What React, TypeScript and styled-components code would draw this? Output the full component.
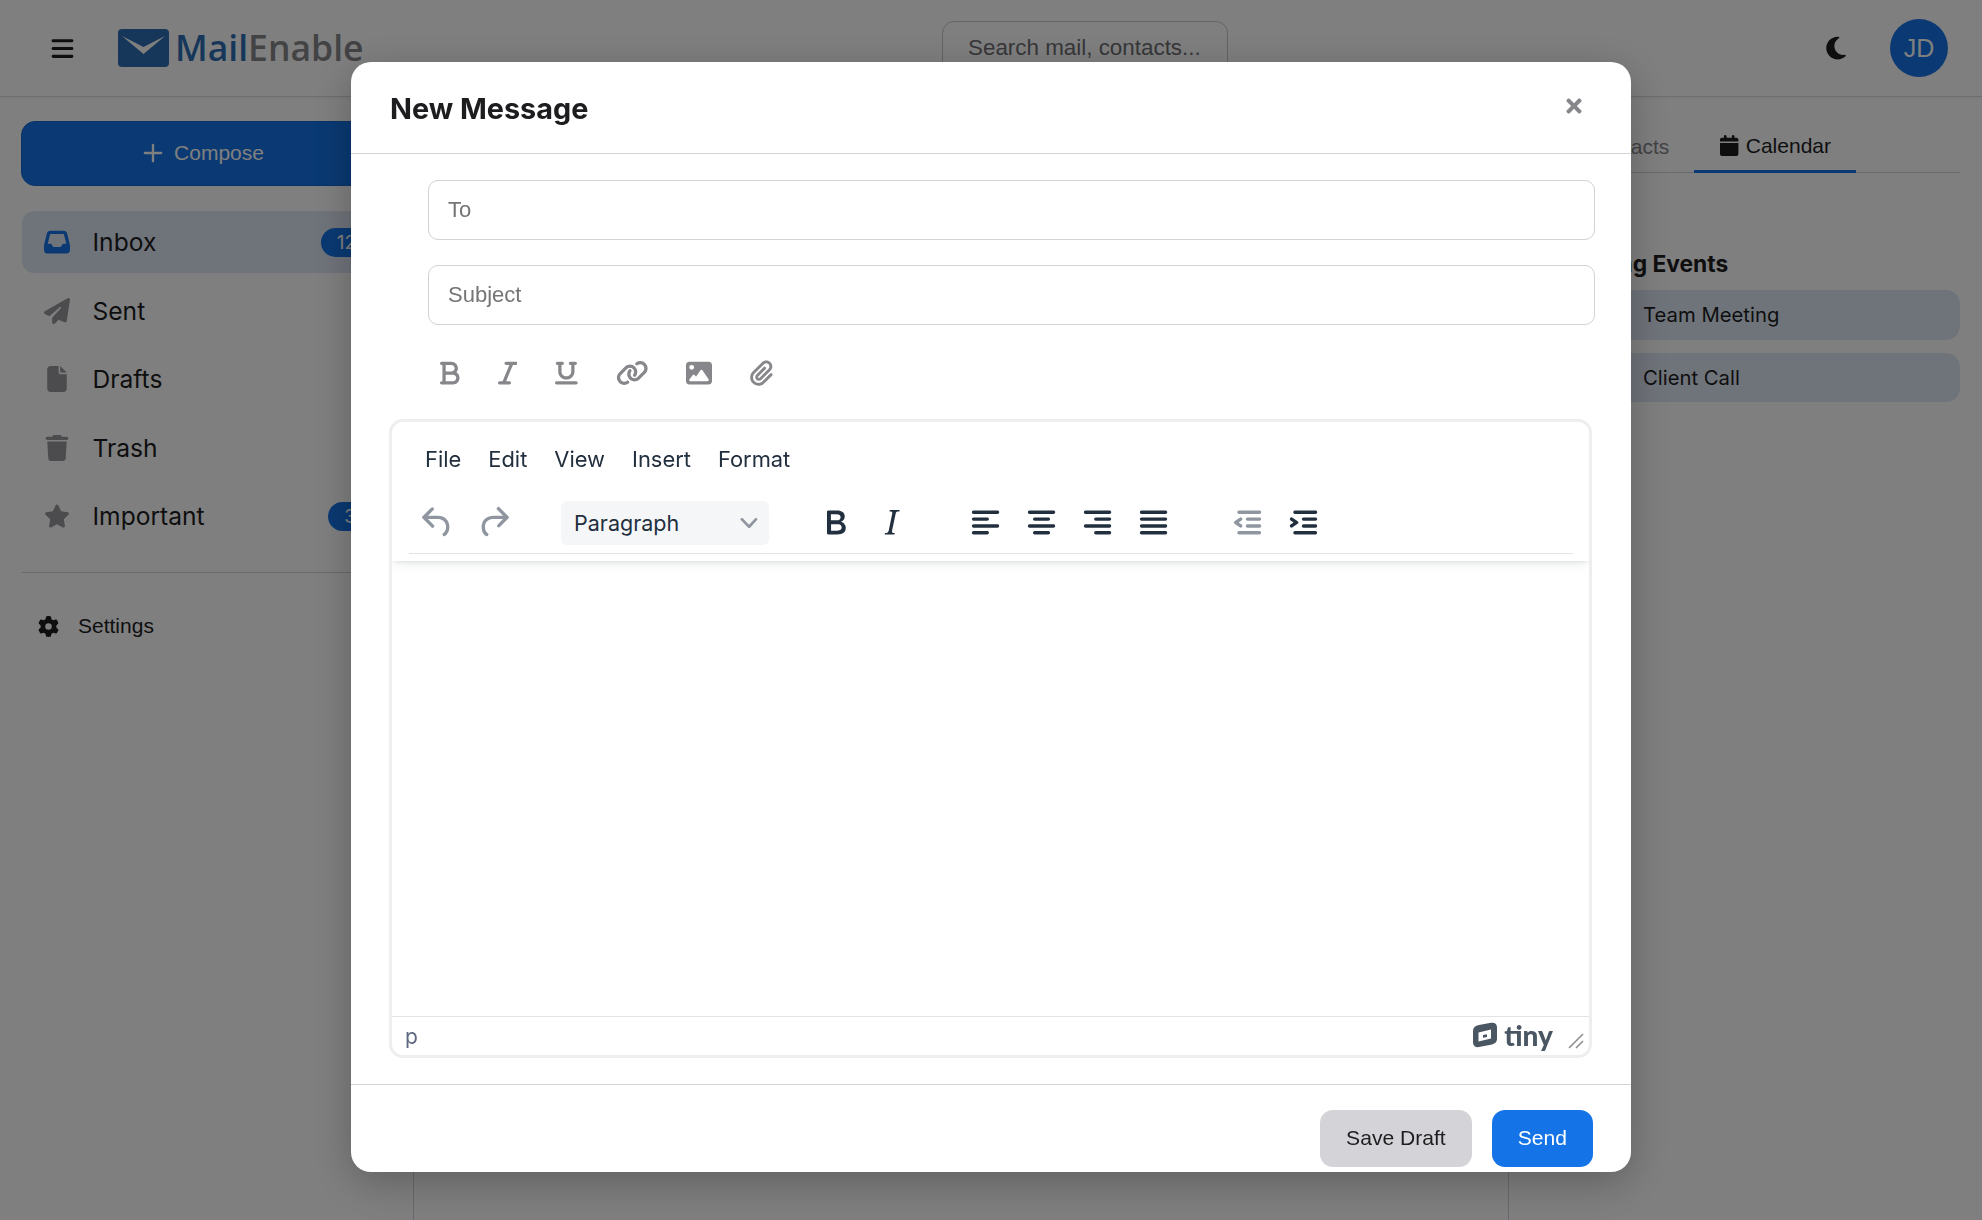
import React from 'react';
import styled, { createGlobalStyle } from 'styled-components';
import {
  FaBars, FaBold, FaCalendar, FaFile, FaGear, FaImage, FaInbox, FaItalic, FaLink, FaMoon,
  FaPaperPlane, FaPaperclip, FaPhone, FaStar, FaTrash, FaUnderline, FaUsers,
} from 'react-icons/fa6';
import { FaTimes } from 'react-icons/fa';
import { Plus } from 'lucide-react';

const controlFont = '"Liberation Sans", Arial, sans-serif';

const GlobalStyle = createGlobalStyle`
  html, body {
    margin: 0;
    height: 100%;
    overflow: hidden;
    background: #fff;
    color: #1d1d1f;
    font-family: Inter, "Liberation Sans", sans-serif;
  }
  * { box-sizing: border-box; }
`;

const Page = styled.div`
  height: 100vh;
  display: flex;
  flex-direction: column;
`;

const Header = styled.header`
  height: 97px;
  flex: none;
  display: flex;
  align-items: center;
  padding: 0 34px 0 50px;
  border-bottom: 1px solid #dcdcdf;
  box-shadow: 0 1px 4px rgba(0, 0, 0, 0.06);
`;

const HeaderLeft = styled.div`
  width: 892px;
  flex: none;
  display: flex;
  align-items: center;
`;

const Burger = styled.span`
  display: flex;
  font-size: 25px;
  color: #1d1d1f;
`;

const Logo = styled.div`
  display: flex;
  align-items: center;
  margin-left: 43px;
  gap: 6px;
`;

const LogoText = styled.span`
  font-family: "Open Sans", sans-serif;
  font-size: 35.5px;
  font-weight: 600;
  margin-top: -2px;
  color: #86868b;
  b { font-weight: 600; color: #2f6fb5; }
`;

const Search = styled.div`
  width: 286px;
  height: 54px;
  display: flex;
  align-items: center;
  padding-left: 25px;
  border: 1px solid #c8c8cc;
  border-radius: 12px;
  font: 400 22.4px ${controlFont};
  color: #6e6e73;
  white-space: nowrap;
`;

const HeaderRight = styled.div`
  margin-left: auto;
  display: flex;
  align-items: center;
  gap: 41px;
`;

const MoonIcon = styled.span`
  display: flex;
  font-size: 26px;
  color: #1d1d1f;
`;

const Avatar = styled.div`
  width: 58px;
  height: 58px;
  border-radius: 50%;
  background: #1473e6;
  color: #fff;
  display: flex;
  align-items: center;
  justify-content: center;
  font: 400 25px ${controlFont};
`;

const Columns = styled.div`
  flex: 1;
  display: flex;
  min-height: 0;
`;

const Sidebar = styled.aside`
  width: 414px;
  flex: none;
  padding: 24px 21px;
  border-right: 1px solid #d2d2d7;
`;

const ComposeButton = styled.button`
  width: 100%;
  height: 65px;
  display: flex;
  align-items: center;
  justify-content: center;
  gap: 7px;
  padding: 0 10px 2px 0;
  background: #1473e6;
  border: 1px solid #1268d0;
  border-radius: 14px;
  color: #fff;
  font: 400 21px ${controlFont};
`;

const Nav = styled.nav`
  margin: 25px 0 25px 1px;
  display: flex;
  flex-direction: column;
  gap: 6.5px;
`;

const NavItem = styled.div<{ $active?: boolean }>`
  height: 62px;
  display: flex;
  align-items: center;
  padding: 0 20px 0 22px;
  border-radius: 12px;
  font-size: 24.6px;
  background: ${(p) => (p.$active ? '#dfe8f5' : 'transparent')};
`;

const NavIcon = styled.span<{ $active?: boolean }>`
  width: 26px;
  display: flex;
  justify-content: center;
  font-size: 26px;
  margin-right: 22.5px;
  color: ${(p) => (p.$active ? '#1473e6' : '#98989d')};
`;

const Badge = styled.span`
  margin-left: auto;
  padding: 0 16px;
  height: 29px;
  border-radius: 15px;
  display: flex;
  align-items: center;
  background: #1473e6;
  color: #fff;
  font-size: 19px;
`;

const Divider = styled.div`
  height: 1px;
  margin-left: 1px;
  background: #d2d2d7;
`;

const SettingsRow = styled.div`
  display: flex;
  align-items: center;
  gap: 19px;
  margin: 41px 0 0 17px;
  font: 400 21px ${controlFont};
  svg { font-size: 21px; color: #1d1d1f; }
`;

const Main = styled.main`
  flex: 1;
`;

const Panel = styled.aside`
  width: 474px;
  flex: none;
  padding: 24px 22px;
  border-left: 1px solid #d2d2d7;
`;

const Tabs = styled.div`
  height: 52px;
  display: flex;
  justify-content: flex-end;
  border-bottom: 1px solid #d2d2d7;
  padding-right: 104px;
`;

const Tab = styled.div<{ $active?: boolean }>`
  padding: 0 25px 0 26px;
  display: flex;
  align-items: center;
  gap: 7px;
  height: 52px;
  font: 400 21px ${controlFont};
  color: ${(p) => (p.$active ? '#1d1d1f' : '#86868b')};
  border-bottom: ${(p) => (p.$active ? '3px solid #1473e6' : 'none')};
  svg { width: 18.4px; height: 21px; }
`;

const PanelTitle = styled.h3`
  margin: 78px 0 13px 2px;
  font-size: 22.8px;
  font-weight: 700;
  line-height: 26px;
`;

const EventItem = styled.div`
  height: 49.5px;
  margin-bottom: 13px;
  display: flex;
  align-items: center;
  padding-left: 74px;
  border-radius: 14px;
  background: #dfe8f5;
  font-size: 20.3px;
`;

const EventIcon = styled.span<{ $w: number }>`
  width: 24px;
  margin-right: 14px;
  display: flex;
  justify-content: center;
  color: #6e6e73;
  svg { width: ${(p) => p.$w}px; height: 20px; flex: none; }
`;

const Overlay = styled.div`
  position: fixed;
  inset: 0;
  padding-top: 62px;
  display: flex;
  justify-content: center;
  align-items: flex-start;
  background: rgba(0, 0, 0, 0.5);
`;

const Modal = styled.div`
  width: 1280px;
  height: 1110px;
  display: flex;
  flex-direction: column;
  background: #fff;
  border-radius: 20px;
  box-shadow: 0 10px 40px rgba(0, 0, 0, 0.25);
`;

const ModalHeader = styled.div`
  height: 92px;
  flex: none;
  display: flex;
  align-items: center;
  justify-content: space-between;
  padding: 0 46px 0 39px;
  border-bottom: 1px solid #d2d2d7;
`;

const ModalTitle = styled.h2`
  margin: 1px 0 0;
  font-size: 28.8px;
  font-weight: 700;
  color: #1d1d1f;
`;

const CloseIcon = styled.span`
  display: flex;
  margin-bottom: 4px;
  font-size: 22px;
  color: #86868b;
`;

const FormBody = styled.div`
  flex: 1;
  padding: 26px 36px 0 77px;
  display: flex;
  flex-direction: column;
  gap: 25px;
`;

const Field = styled.input`
  height: 60px;
  width: 100%;
  flex: none;
  padding: 0 19px;
  border: 1px solid #d2d2d7;
  border-radius: 10px;
  font: 400 22px ${controlFont};
  outline: none;
  &::placeholder { color: #757575; opacity: 1; }
`;

const FormatBar = styled.div`
  height: 26px;
  margin: 10px 0 0 -39px;
  padding-left: 51px;
  display: flex;
  align-items: center;
  gap: 38px;
  color: #86868b;
`;

const FormatIcon = styled.span<{ $w: number }>`
  display: block;
  width: ${(p) => p.$w}px;
  height: 26px;
  svg { display: block; width: 100%; height: 100%; }
`;

const Editor = styled.div`
  height: 639px;
  flex: none;
  margin: 8px 3px 0 -39px;
  display: flex;
  flex-direction: column;
  border: 3px solid #eeeeee;
  border-radius: 14px;
`;

const EditorHeader = styled.div`
  height: 139px;
  flex: none;
  padding: 0 16px 0 17px;
  box-shadow: 0 2px 4px -1px rgba(34, 47, 62, 0.1), 0 8px 10px -4px rgba(34, 47, 62, 0.07);
  clip-path: inset(0 0 -16px 0);
`;

const MenuBar = styled.div`
  height: 76px;
  padding: 0 0 2px 16px;
  display: flex;
  align-items: center;
  gap: 27px;
  font-size: 21.9px;
  color: #222f3e;
`;

const ToolBar = styled.div`
  height: 56px;
  padding-bottom: 6px;
  display: flex;
  align-items: center;
  gap: 38px;
  border-bottom: 1px solid #e3e3e3;
`;

const ToolGroup = styled.div`
  display: flex;
`;

const ToolButton = styled.span<{ $muted?: boolean }>`
  width: 56px;
  height: 42px;
  display: flex;
  align-items: center;
  justify-content: center;
  color: ${(p) => (p.$muted ? '#8f96a0' : '#222f3e')};
  svg { display: block; fill: currentColor; }
`;

const BlockSelect = styled.div`
  width: 208px;
  height: 44px;
  margin-left: 2px;
  display: flex;
  align-items: center;
  justify-content: space-between;
  padding: 0 9px 0 13px;
  border-radius: 6px;
  background: #f5f6f7;
  font-size: 21.5px;
  color: #222f3e;
  svg { fill: #8f96a0; }
`;

const EditArea = styled.div`
  flex: 1;
`;

const StatusBar = styled.div`
  height: 39px;
  flex: none;
  display: flex;
  align-items: center;
  padding: 0 5px 0 13px;
  border-top: 1px solid #e3e3e3;
  font-size: 21px;
  color: #5f6b7f;
`;

const TinyBrand = styled.div`
  margin: -2px 0 0 auto;
  display: flex;
  align-items: center;
  gap: 6px;
  color: #4a5763;
  font: 900 28px Lato, sans-serif;
  line-height: 1;
  svg { fill: currentColor; }
`;

const ResizeHandle = styled.svg`
  margin: 9px 0 0 15px;
`;

const ModalFooter = styled.div`
  height: 88px;
  flex: none;
  display: flex;
  align-items: flex-start;
  justify-content: flex-end;
  gap: 20px;
  padding: 25px 38px 0 0;
  border-top: 1px solid #d2d2d7;
`;

const FooterButton = styled.button<{ $primary?: boolean }>`
  height: 57px;
  padding: 0 26px 2px;
  border: none;
  border-radius: 13px;
  background: ${(p) => (p.$primary ? '#1473e6' : '#d4d4d8')};
  color: ${(p) => (p.$primary ? '#fff' : '#1d1d1f')};
  font: 400 21.1px ${controlFont};
`;

const TOOL_PATHS = {
  undo: 'M6.4 8H12c3.7 0 6.2 2 6.8 5.1.6 2.7-.4 5.6-2.3 6.8a1 1 0 0 1-1-1.8c1.1-.7 1.8-2.7 1.4-4.6-.5-2.1-2.1-3.5-4.9-3.5H6.4l3.3 3.3a1 1 0 1 1-1.4 1.4l-5-5a1 1 0 0 1 0-1.4l5-5a1 1 0 0 1 1.4 1.4L6.4 8Z',
  redo: 'M17.6 10H12c-2.8 0-4.4 1.4-4.9 3.5-.4 2 .3 3.9 1.4 4.6a1 1 0 1 1-1 1.8c-2-1.2-2.9-4.1-2.3-6.8.6-3 3-5.1 6.8-5.1h5.6l-3.3-3.3a1 1 0 1 1 1.4-1.4l5 5a1 1 0 0 1 0 1.4l-5 5a1 1 0 0 1-1.4-1.4l3.3-3.3Z',
  bold: 'M7.8 19c-.3 0-.5 0-.6-.2l-.2-.5V5.7c0-.2 0-.4.2-.5l.6-.2h5c1.5 0 2.7.3 3.5 1 .7.6 1.1 1.4 1.1 2.5a3 3 0 0 1-.6 1.9c-.4.6-1 1-1.6 1.2.4.1.9.3 1.3.6s.8.7 1 1.2c.4.4.5 1 .5 1.6 0 1.3-.4 2.3-1.3 3-.8.7-2.1 1-3.8 1H7.8Zm5-8.3c.6 0 1.2-.1 1.6-.5.4-.3.6-.7.6-1.3 0-1.1-.8-1.7-2.3-1.7H9.3v3.5h3.4Zm.5 6c.7 0 1.3-.1 1.7-.4.4-.4.6-.9.6-1.5s-.2-1-.7-1.4c-.4-.3-1-.4-2-.4H9.4v3.8h4Z',
  italic: 'M16.7 4.7l-.1.9h-.3c-.6 0-1 0-1.4.3-.3.3-.4.6-.5 1.1l-2.1 9.8v.6c0 .5.4.8 1.4.8h.2l-.2.8H8l.2-.8h.2c1.1 0 1.8-.5 2-1.5l2-9.8.1-.5c0-.6-.4-.8-1.4-.8h-.3l.2-.9h5.8Z',
  alignLeft: 'M5 5h14c.6 0 1 .4 1 1s-.4 1-1 1H5a1 1 0 1 1 0-2Zm0 4h8c.6 0 1 .4 1 1s-.4 1-1 1H5a1 1 0 1 1 0-2Zm0 8h8c.6 0 1 .4 1 1s-.4 1-1 1H5a1 1 0 0 1 0-2Zm0-4h14c.6 0 1 .4 1 1s-.4 1-1 1H5a1 1 0 0 1 0-2Z',
  alignCenter: 'M5 5h14c.6 0 1 .4 1 1s-.4 1-1 1H5a1 1 0 1 1 0-2Zm3 4h8c.6 0 1 .4 1 1s-.4 1-1 1H8a1 1 0 1 1 0-2Zm0 8h8c.6 0 1 .4 1 1s-.4 1-1 1H8a1 1 0 0 1 0-2Zm-3-4h14c.6 0 1 .4 1 1s-.4 1-1 1H5a1 1 0 0 1 0-2Z',
  alignRight: 'M5 5h14c.6 0 1 .4 1 1s-.4 1-1 1H5a1 1 0 1 1 0-2Zm6 4h8c.6 0 1 .4 1 1s-.4 1-1 1h-8a1 1 0 0 1 0-2Zm0 8h8c.6 0 1 .4 1 1s-.4 1-1 1h-8a1 1 0 0 1 0-2Zm-6-4h14c.6 0 1 .4 1 1s-.4 1-1 1H5a1 1 0 0 1 0-2Z',
  justify: 'M5 5h14c.6 0 1 .4 1 1s-.4 1-1 1H5a1 1 0 1 1 0-2Zm0 4h14c.6 0 1 .4 1 1s-.4 1-1 1H5a1 1 0 1 1 0-2Zm0 4h14c.6 0 1 .4 1 1s-.4 1-1 1H5a1 1 0 0 1 0-2Zm0 4h14c.6 0 1 .4 1 1s-.4 1-1 1H5a1 1 0 0 1 0-2Z',
  outdent: 'M7 5h12c.6 0 1 .4 1 1s-.4 1-1 1H7a1 1 0 1 1 0-2Zm5 4h7c.6 0 1 .4 1 1s-.4 1-1 1h-7a1 1 0 0 1 0-2Zm0 4h7c.6 0 1 .4 1 1s-.4 1-1 1h-7a1 1 0 0 1 0-2Zm-5 4h12a1 1 0 0 1 0 2H7a1 1 0 0 1 0-2Zm1.6-3.8a1 1 0 0 1-1.2 1.6l-3-2a1 1 0 0 1 0-1.6l3-2a1 1 0 0 1 1.2 1.6L6.8 12l1.8 1.2Z',
  indent: 'M7 5h12c.6 0 1 .4 1 1s-.4 1-1 1H7a1 1 0 1 1 0-2Zm5 4h7c.6 0 1 .4 1 1s-.4 1-1 1h-7a1 1 0 0 1 0-2Zm0 4h7c.6 0 1 .4 1 1s-.4 1-1 1h-7a1 1 0 0 1 0-2Zm-5 4h12a1 1 0 0 1 0 2H7a1 1 0 0 1 0-2Zm-2.6-3.8L6.2 12l-1.8-1.2a1 1 0 0 1 1.2-1.6l3 2a1 1 0 0 1 0 1.6l-3 2a1 1 0 1 1-1.2-1.6Z',
};

const Tool = ({ name, muted }: { name: keyof typeof TOOL_PATHS; muted?: boolean }) => (
  <ToolButton $muted={muted}>
    <svg width={41} height={41} viewBox="0 0 24 24">
      <path d={TOOL_PATHS[name]} />
    </svg>
  </ToolButton>
);

const navItems = [
  { label: 'Inbox', icon: <FaInbox />, badge: '12', active: true },
  { label: 'Sent', icon: <FaPaperPlane /> },
  { label: 'Drafts', icon: <FaFile /> },
  { label: 'Trash', icon: <FaTrash /> },
  { label: 'Important', icon: <FaStar />, badge: '3' },
];

const App: React.FC = () => (
  <>
    <GlobalStyle />
    <Page>
      <Header>
        <HeaderLeft>
          <Burger><FaBars /></Burger>
          <Logo>
            <svg width="51" height="38" viewBox="0 0 51 38">
              <rect width="51" height="38" rx="4" fill="#2f6fb5" />
              <path d="M4 7 L25.5 18 L47 7 L25.5 25 Z" fill="#fff" />
            </svg>
            <LogoText><b>Mail</b>Enable</LogoText>
          </Logo>
        </HeaderLeft>
        <Search>Search mail, contacts...</Search>
        <HeaderRight>
          <MoonIcon><FaMoon /></MoonIcon>
          <Avatar>JD</Avatar>
        </HeaderRight>
      </Header>
      <Columns>
        <Sidebar>
          <ComposeButton><Plus size={28} strokeWidth={2} />Compose</ComposeButton>
          <Nav>
            {navItems.map((item) => (
              <NavItem key={item.label} $active={item.active}>
                <NavIcon $active={item.active}>{item.icon}</NavIcon>
                {item.label}
                {item.badge && <Badge>{item.badge}</Badge>}
              </NavItem>
            ))}
          </Nav>
          <Divider />
          <SettingsRow><FaGear />Settings</SettingsRow>
        </Sidebar>
        <Main />
        <Panel>
          <Tabs>
            <Tab>Contacts</Tab>
            <Tab $active><FaCalendar />Calendar</Tab>
          </Tabs>
          <PanelTitle>Upcoming Events</PanelTitle>
          <EventItem><EventIcon $w={25}><FaUsers /></EventIcon>Team Meeting</EventItem>
          <EventItem><EventIcon $w={20}><FaPhone /></EventIcon>Client Call</EventItem>
        </Panel>
      </Columns>
    </Page>
    <Overlay>
      <Modal>
        <ModalHeader>
          <ModalTitle>New Message</ModalTitle>
          <CloseIcon><FaTimes /></CloseIcon>
        </ModalHeader>
        <FormBody>
          <Field placeholder="To" />
          <Field placeholder="Subject" />
          <FormatBar>
            <FormatIcon $w={19.5}><FaBold /></FormatIcon>
            <FormatIcon $w={19.5}><FaItalic /></FormatIcon>
            <FormatIcon $w={22.75}><FaUnderline /></FormatIcon>
            <FormatIcon $w={32.5}><FaLink /></FormatIcon>
            <FormatIcon $w={26}><FaImage /></FormatIcon>
            <FormatIcon $w={22.75}><FaPaperclip /></FormatIcon>
          </FormatBar>
          <Editor>
            <EditorHeader>
              <MenuBar>
                <span>File</span><span>Edit</span><span>View</span><span>Insert</span><span>Format</span>
              </MenuBar>
              <ToolBar>
                <ToolGroup>
                  <Tool name="undo" muted />
                  <Tool name="redo" muted />
                </ToolGroup>
                <BlockSelect>
                  Paragraph
                  <svg width="22" height="22" viewBox="0 0 10 10">
                    <path d="M8.7 2.2c.3-.3.8-.3 1 0 .4.4.4.9 0 1.2L5.7 7.8c-.3.3-.9.3-1.2 0L.2 3.4a.8.8 0 0 1 0-1.2c.3-.3.8-.3 1.1 0L5 6l3.7-3.8Z" transform="translate(1.2 1.2) scale(.76)" />
                  </svg>
                </BlockSelect>
                <ToolGroup>
                  <Tool name="bold" />
                  <Tool name="italic" />
                </ToolGroup>
                <ToolGroup>
                  <Tool name="alignLeft" />
                  <Tool name="alignCenter" />
                  <Tool name="alignRight" />
                  <Tool name="justify" />
                </ToolGroup>
                <ToolGroup>
                  <Tool name="outdent" muted />
                  <Tool name="indent" />
                </ToolGroup>
              </ToolBar>
            </EditorHeader>
            <EditArea />
            <StatusBar>
              p
              <TinyBrand>
                <svg width="26" height="26" viewBox="0 0 26 26">
                  <path fillRule="evenodd" d="M7 3 L19 .8 Q25 0 25 5.5 V17 Q25 21 20 22.5 L7 25 Q1 26 1 20 V9 Q1 4 7 3Z M6.5 10.5 L19 7.5 V16.5 L6.5 19.5Z M11 13 L15 12.2 V15 L11 15.8Z" />
                </svg>
                tiny
              </TinyBrand>
              <ResizeHandle width="16" height="16" viewBox="0 0 16 16">
                <path d="M1 15 L15 1 M8 15 L15 8" stroke="#8f8f93" strokeWidth="1.6" fill="none" />
              </ResizeHandle>
            </StatusBar>
          </Editor>
        </FormBody>
        <ModalFooter>
          <FooterButton>Save Draft</FooterButton>
          <FooterButton $primary>Send</FooterButton>
        </ModalFooter>
      </Modal>
    </Overlay>
  </>
);

export default App;
